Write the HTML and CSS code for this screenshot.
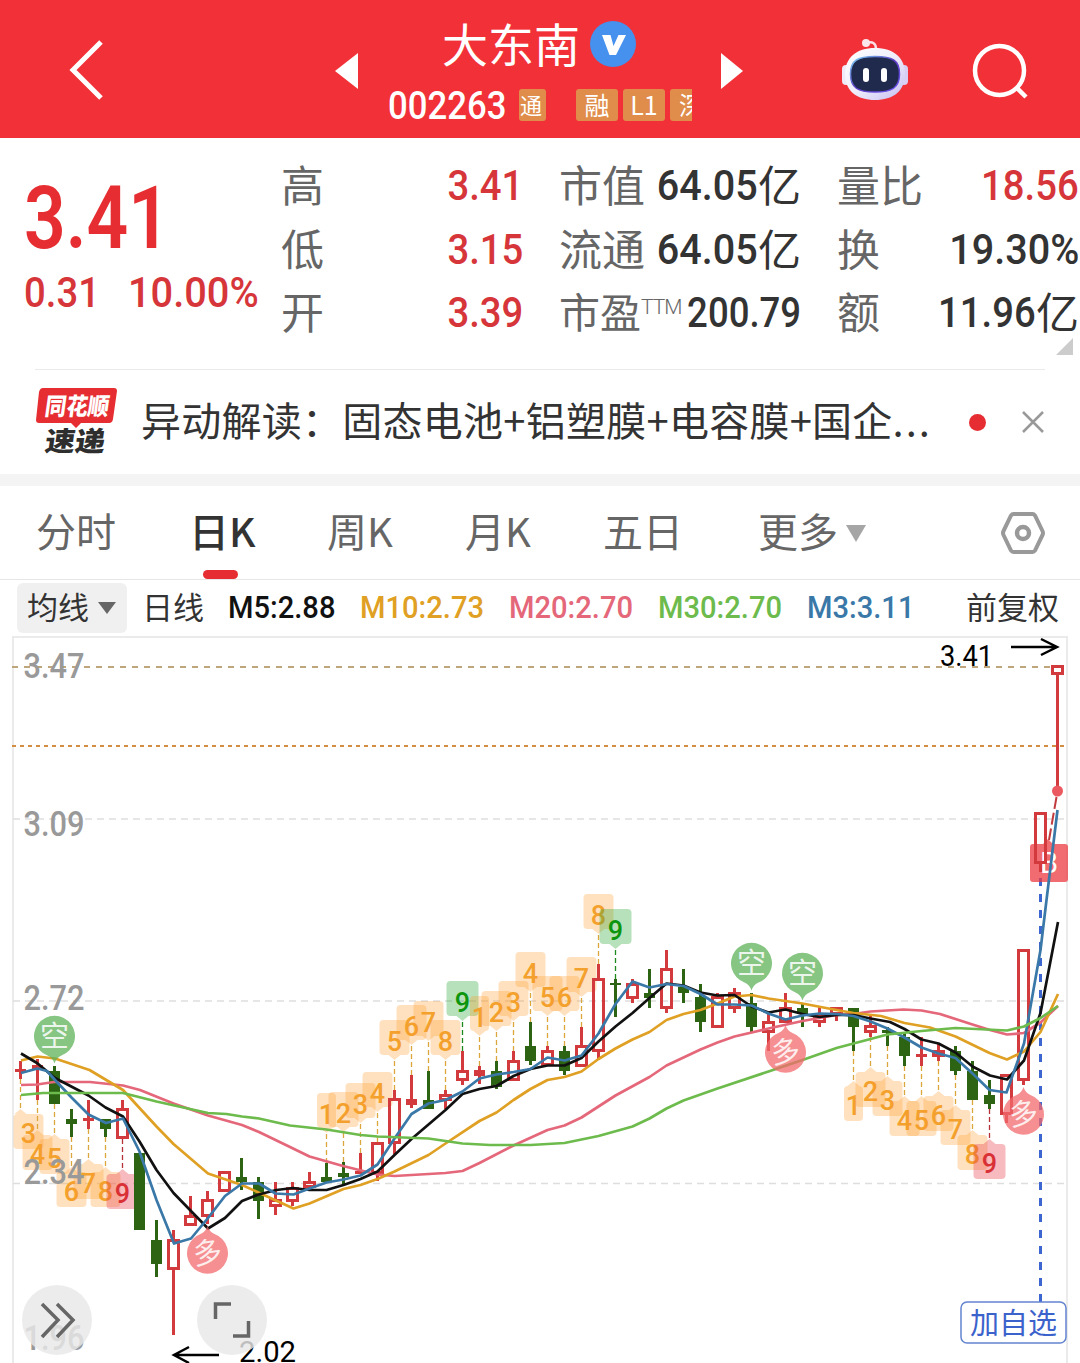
FILE: index.html
```
<!DOCTYPE html>
<html lang="zh-CN">

<head>
  <meta charset="utf-8">
  <title>大东南 002263</title>
  <link rel="stylesheet" href="styles.css">
</head>

<body>

  <header class="header">
    <svg class="back" width="40" height="64" viewBox="0 0 40 64">
      <path d="M34 4L6 32L34 60" fill="none" stroke="#fff" stroke-width="5" />
    </svg>
    <svg class="prev" width="23" height="36" viewBox="0 0 23 36">
      <path d="M23 0V36L0 18Z" fill="#fff" />
    </svg>
    <div class="stock">
      <div class="stock-name"><span>大东南</span>
        <svg width="46" height="46" viewBox="0 0 46 46">
          <circle cx="23" cy="23" r="23" fill="#4690ee" />
          <path d="M12 14H20.500L23.500 25L28.500 14H36L26 34H19.500Z" fill="#fff" />
        </svg>
      </div>
      <div class="stock-code">
        <span class="num code">002263</span>
        <span class="tag tag-first">通</span>
        <span class="tag">融</span>
        <span class="tag">L1</span>
        <span class="tag tag-last">深</span>
      </div>
    </div>
    <svg class="next" width="22" height="36" viewBox="0 0 22 36">
      <path d="M0 0V36L22 18Z" fill="#fff" />
    </svg>
    <svg class="robot" width="68" height="64" viewBox="0 0 68 64">
      <defs>
        <linearGradient id="head" x1="0" y1="0" x2="1" y2="1">
          <stop offset="0" stop-color="#fff" />
          <stop offset=".5" stop-color="#f0eefa" />
          <stop offset="1" stop-color="#c4bdf2" />
        </linearGradient>
        <linearGradient id="rim" x1="0" y1="0" x2="1" y2="1">
          <stop offset="0" stop-color="#7fd8f5" />
          <stop offset=".5" stop-color="#5c3cc4" />
          <stop offset="1" stop-color="#6a55ee" />
        </linearGradient>
      </defs>
      <path d="M26 6C31 4 35 6 35 12" fill="none" stroke="#fbdfe6" stroke-width="2.500" />
      <circle cx="25" cy="6" r="4" fill="#fbe6ec" />
      <rect x="1" y="28" width="8" height="20" rx="4" fill="#efeaf8" />
      <rect x="59" y="28" width="8" height="20" rx="4" fill="#d9cff5" />
      <path d="M34 11C53 11 64 21 64 37C64 54 52 63 34 63C16 63 4 54 4 37C4 21 15 11 34 11Z" fill="url(#head)" />
      <path d="M34 19.500C51 19.500 58.500 23 58.500 37C58.500 51 51 55 34 55C17 55 9.500 51 9.500 37C9.500 23 17 19.500 34 19.500Z" fill="#202a4c" stroke="url(#rim)" stroke-width="1.500" />
      <rect x="22" y="31" width="6" height="14" rx="3" fill="#fff" />
      <rect x="40" y="31" width="6" height="14" rx="3" fill="#fff" />
    </svg>
    <svg class="search" width="58" height="58" viewBox="0 0 58 58">
      <circle cx="27.500" cy="27.500" r="24.500" fill="none" stroke="#fff" stroke-width="4.500" />
      <path d="M44 44L54 54" stroke="#fff" stroke-width="4.500" />
    </svg>
  </header>

  <section class="quote">
    <div class="price">
      <div class="num last">3.41</div>
      <div class="change"><span class="num diff">0.31</span><span class="num percent">10.00%</span></div>
    </div>
    <div class="col">
      <p>高<span class="value up"><span class="num">3.41</span></span></p>
      <p>低<span class="value up"><span class="num">3.15</span></span></p>
      <p>开<span class="value up"><span class="num">3.39</span></span></p>
    </div>
    <div class="col">
      <p>市值<span class="value"><span class="num wide">64.05</span>亿</span></p>
      <p>流通<span class="value"><span class="num wide">64.05</span>亿</span></p>
      <p><span class="pe">市盈</span><sup>TTM</sup><span class="value"><span class="num pe-value">200.79</span></span></p>
    </div>
    <div class="col">
      <p>量比<span class="value up"><span class="num">18.56</span></span></p>
      <p>换<span class="value"><span class="num wide">19.30%</span></span></p>
      <p>额<span class="value"><span class="num">11.96</span>亿</span></p>
    </div>
    <i class="corner"></i>
  </section>

  <section class="news">
    <svg width="84" height="70" viewBox="0 0 84 70">
      <path d="M8 1H79Q82 1 82 4L78 32Q77.500 36 74 36H46L41 41L36 36H4Q1 36 1 33L4 5Q5 1 8 1Z" fill="#e62e32" />
      <text class="logo" x="10" y="28" textLength="64" lengthAdjust="spacingAndGlyphs" font-size="24" fill="#fff" transform="translate(3 0) skewX(-8)">同花顺</text>
      <text class="logo" x="10" y="64" textLength="60" lengthAdjust="spacingAndGlyphs" font-size="27" fill="#2e2e2e" transform="translate(8 0) skewX(-8)">速递</text>
    </svg>
    <span class="news-text">异动解读：固态电池+铝塑膜+电容膜+国企<span class="dots">...</span></span>
    <i class="dot"></i>
    <svg class="close" width="24" height="24" viewBox="0 0 24 24">
      <path d="M2 2L22 22M22 2L2 22" stroke="#999" stroke-width="2.500" />
    </svg>
  </section>

  <nav class="tabs">
    <a>分时</a>
    <a class="active">日K</a>
    <a>周K</a>
    <a>月K</a>
    <a>五日</a>
    <a>更多<i class="caret"></i></a>
    <svg class="settings" width="46" height="44" viewBox="0 0 46 44">
      <path d="M13.500 3H32.500Q34 3 35 4.500L42.500 20Q43.500 22 42.500 24L35 39.500Q34 41 32.500 41H13.500Q12 41 11 39.500L3.500 24Q2.500 22 3.500 20L11 4.500Q12 3 13.500 3Z" fill="none" stroke="#999" stroke-width="4" />
      <circle cx="23" cy="22" r="6" fill="none" stroke="#999" stroke-width="4.500" />
    </svg>
  </nav>

  <div class="averages">
    <span class="select">均线<i class="caret"></i></span>
    <span class="period">日线</span>
    <span class="ma ma-short m5"><span class="num">M5:2.88</span></span>
    <span class="ma m10"><span class="num">M10:2.73</span></span>
    <span class="ma m20"><span class="num">M20:2.70</span></span>
    <span class="ma m30"><span class="num">M30:2.70</span></span>
    <span class="ma ma-short m3"><span class="num">M3:3.11</span></span>
    <span class="adjust">前复权</span>
  </div>

  <svg class="chart" width="1080" height="727" viewBox="0 636 1080 727">
    <path class="frame" d="M13 1363V637H1067V1363" />
    <path class="grid" d="M13 819H1066M13 1001H1066M13 1183.500H1066" />
    <path class="grid-top" d="M12 667H1054" />
    <path class="grid-alert" d="M12 746H1064" />

    <g id="tags"></g>
    <path class="signal" d="M1040.500 878V1302" />
    <path d="M1030 847Q1030 844 1033 844H1043L1048 839L1053 844H1065Q1068 844 1068 847V879Q1068 882 1065 882H1033Q1030 882 1030 879Z" fill="#ec3b40" opacity=".75" />
    <text x="1049" y="873" font-size="29" text-anchor="middle" fill="#fff">B</text>
    <g id="candles"></g>
    <path d="M1056.500 797L1049 840" stroke="#c03a3e" stroke-width="2" stroke-dasharray="12 4" />
    <circle cx="1057.500" cy="791" r="5.500" fill="#ea5a60" />

    <g id="averages"></g>
    <g id="pins"></g>

    <g class="scale">
      <text x="23.500" y="678" textLength="61" lengthAdjust="spacingAndGlyphs">3.47</text>
      <text x="23.500" y="836" textLength="61" lengthAdjust="spacingAndGlyphs">3.09</text>
      <text x="23.500" y="1010" textLength="61" lengthAdjust="spacingAndGlyphs">2.72</text>
      <text x="23.500" y="1184" textLength="61" lengthAdjust="spacingAndGlyphs">2.34</text>
      <text x="23.500" y="1350" textLength="61" lengthAdjust="spacingAndGlyphs">1.96</text>
    </g>

    <g class="extremes">
      <text x="940" y="666" textLength="53" lengthAdjust="spacingAndGlyphs">3.41</text>
      <path d="M1011 647H1057M1041 639L1057 647L1041 655" />
      <text x="239" y="1362" textLength="57" lengthAdjust="spacingAndGlyphs">2.02</text>
      <path d="M219 1355H175M189 1347L174 1355L189 1363" />
    </g>

    <g class="round">
      <circle cx="57" cy="1320" r="35" />
      <path d="M42 1304L58 1320L42 1337M57 1304L73 1320L57 1337" />
      <circle cx="232" cy="1320" r="35" />
      <path d="M215.500 1319V1304H231M233 1336H248.500V1321" />
    </g>

    <rect x="961" y="1302" width="105" height="41" rx="6" fill="#fff" stroke="#6484d0" stroke-width="1.500" />
    <text x="970" y="1334" textLength="87" font-size="29" fill="#3c62cc">加自选</text>
  </svg>

  <script src="chart.js"></script>

</body>

</html>
```
FILE: styles.css
```
body {
  width: 1080px;
  margin: 0;
  background: #fff;
  color: #333;
  font-family: "Noto Sans CJK SC", sans-serif;
  overflow: hidden;
}

p {
  margin: 0;
}

svg {
  display: block;
  flex: none;
}

.num {
  display: inline-block;
  font-family: Roboto, sans-serif;
  font-weight: 500;
  transform: scaleX(.89);
  transform-origin: left;
}

.header {
  display: flex;
  height: 138px;
  background: #f23037;
  color: #fff;
}

.back {
  margin: 38px 0 0 67px;
}

.prev {
  margin: 53px 0 0 228px;
}

.stock {
  width: 302px;
  margin-left: 30px;
}

.stock-name {
  display: flex;
  gap: 10px;
  height: 50px;
  padding: 21px 0 0 54px;
  font-size: 46px;
  line-height: 43px;
  white-space: nowrap;
}

.stock-code {
  display: flex;
  gap: 5px;
  margin-top: 18px;
  line-height: 32px;
}

.code {
  width: 126px;
  font-size: 39px;
  line-height: 34px;
}

.tag {
  width: 42px;
  height: 32px;
  flex: none;
  border-radius: 3px;
  background: #e08d4b;
  font-size: 25px;
  line-height: 30px;
  text-align: center;
}

.tag-first {
  width: 27px;
  margin-right: 25px;
  font-size: 22px;
  text-indent: -3px;
  overflow: hidden;
}

.tag-last {
  width: 22px;
  border-radius: 3px 0 0 3px;
  text-align: left;
  text-indent: 9px;
  overflow: hidden;
}

.next {
  margin: 53px 0 0 31px;
}

.robot {
  margin: 37px 0 0 98px;
}

.search {
  margin: 43px 0 0 63px;
}

.quote {
  display: flex;
  gap: 36px;
  position: relative;
  height: 231px;
  font-size: 43px;
}

.price {
  width: 221px;
  padding-left: 24px;
  color: #e62e32;
}

.last {
  margin-top: 30px;
  font-size: 87px;
  font-weight: 600;
  line-height: 100px;
  transform: scaleX(.84);
}

.change {
  margin-top: -4px;
  line-height: 48px;
  color: #d6363a;
  white-space: nowrap;
}

.diff {
  width: 104px;
}

.percent {
  transform: scaleX(.925);
}

.col {
  width: 242px;
  padding-top: 16px;
}

.col p {
  display: flex;
  height: 63.5px;
  line-height: 59px;
  color: #666;
  white-space: nowrap;
}

.col .value {
  display: flex;
  flex: 1;
  justify-content: flex-end;
  margin-left: -30px;
  color: #333;
}

.col .up {
  color: #d6363a;
}

.col .num {
  line-height: 63px;
  transform-origin: right;
}

.col .wide {
  transform: scaleX(.92);
}

.col .pe-value {
  transform: scaleX(.85);
}

.pe {
  font-size: 41px;
}

.col sup {
  width: 41px;
  height: 40px;
  font-family: Roboto, sans-serif;
  font-size: 21px;
  font-weight: 300;
  line-height: 52px;
  letter-spacing: -1px;
  vertical-align: baseline;
}

.corner {
  position: absolute;
  right: 7px;
  bottom: 14px;
  border-left: 17px solid transparent;
  border-bottom: 17px solid #ccc;
}

.news {
  display: flex;
  align-items: center;
  height: 104px;
  margin: 0 35px;
  border-top: 1px solid #eaeaea;
}

.news-text {
  width: 812px;
  margin: -6px 0 0 22px;
  font-size: 40px;
  letter-spacing: .25px;
  white-space: nowrap;
}

.dots {
  letter-spacing: 2px;
}

.dot {
  width: 17px;
  height: 17px;
  margin-left: 18px;
  border-radius: 50%;
  background: #e62e32;
}

.close {
  margin-left: 35px;
}

.tabs {
  display: flex;
  box-sizing: border-box;
  height: 106px;
  border-top: 12px solid #f4f4f4;
  border-bottom: 1px solid #e6e6e6;
  padding-left: 36px;
  font-size: 40px;
  line-height: 88px;
  color: #666;
}

.tabs a {
  width: 138px;
  flex: none;
}

.tabs a:nth-child(1) {
  width: 153px;
}

.tabs a:nth-child(5) {
  width: 155px;
}

.tabs a:nth-child(6) {
  width: 242px;
}

.tabs .active {
  color: #333;
  font-weight: 500;
}

.active::after {
  content: "";
  display: block;
  width: 35px;
  height: 9px;
  margin: -4px 0 0 14px;
  border-radius: 5px;
  background: #e62e32;
}

.caret {
  display: inline-block;
  margin-left: 8px;
  border: 10px solid transparent;
  border-top: 17px solid #a6a6a6;
  border-bottom: 0;
  vertical-align: 5px;
}

.settings {
  margin-top: 25px;
}

.averages {
  display: flex;
  align-items: center;
  height: 56px;
  padding-left: 17px;
  font-size: 31px;
  line-height: 46px;
  white-space: nowrap;
}

.select {
  box-sizing: border-box;
  width: 110px;
  height: 50px;
  padding-left: 10px;
  border-radius: 6px;
  background: #f0f0f0;
  line-height: 45px;
}

.select .caret {
  margin-left: 9px;
  border-width: 12px 9px 0;
  border-top-color: #666;
}

.period {
  width: 86px;
  margin: -5px 0 0 15px;
}

.ma {
  width: 149px;
  margin-top: -6px;
  font-size: 32px;
}

.ma .num {
  transform: scaleX(.91);
}

.ma-short {
  width: 132px;
}

.adjust {
  margin: -5px 0 0 -1px;
}

.m5 { color: #111; }
.m10 { color: #dfa023; }
.m20 { color: #e4677a; }
.m30 { color: #6dbb4c; }
.m3 { width: 160px; color: #3a78a8; }

.chart text {
  font-family: Roboto, "Noto Sans CJK SC", sans-serif;
}

.logo {
  font-family: "Noto Sans CJK SC", sans-serif;
  font-weight: 900;
}

.frame {
  fill: none;
  stroke: #ebebeb;
  stroke-width: 2;
}

.grid {
  stroke: #dedede;
  stroke-width: 1.5;
  stroke-dasharray: 7 5;
}

.grid-top {
  stroke: #bfa57c;
  stroke-width: 2;
  stroke-dasharray: 6 6;
}

.grid-alert {
  stroke: #d08f45;
  stroke-width: 2;
  stroke-dasharray: 4 4;
}

.signal {
  stroke: #3c66d0;
  stroke-width: 3;
  stroke-dasharray: 8 8;
}

.line {
  fill: none;
  stroke-width: 2.7;
  stroke-linejoin: round;
}

.scale {
  fill: #999;
  font-size: 35px;
  font-weight: 500;
}

.extremes {
  fill: #000;
  font-size: 30px;
}

.extremes path {
  fill: none;
  stroke: #000;
  stroke-width: 2.5;
}

.round circle {
  fill: #e8e8e8;
  fill-opacity: .82;
}

.round path {
  fill: none;
  stroke: #666;
  stroke-width: 3.5;
}
```
FILE: chart.js
```
'use strict'

const NS = 'http://www.w3.org/2000/svg';
const RED = '#d23a3e';
const GREEN = '#2d6413';

// [direction, high, body top, body bottom, low]
const candles = [
  ['r', 1061, 1069, 1072, 1079], ['r', 1059, 1065, 1069, 1100], ['g', 1066, 1071, 1104, 1104],
  ['g', 1109, 1119, 1124, 1137], ['r', 1100, 1118, 1121, 1129], ['g', 1119, 1119, 1129, 1137],
  ['r', 1100, 1108, 1139, 1139], ['g', 1153, 1153, 1230, 1230], ['g', 1220, 1240, 1264, 1277],
  ['r', 1230, 1239, 1270, 1335], ['r', 1196, 1215, 1226, 1226], ['r', 1191, 1199, 1217, 1224],
  ['r', 1171, 1171, 1192, 1192], ['g', 1158, 1177, 1182, 1190], ['g', 1177, 1182, 1201, 1219],
  ['r', 1182, 1199, 1207, 1215], ['r', 1182, 1187, 1202, 1206], ['r', 1172, 1181, 1188, 1188],
  ['g', 1163, 1177, 1182, 1182], ['g', 1162, 1173, 1177, 1184], ['r', 1153, 1171, 1174, 1174],
  ['r', 1142, 1142, 1174, 1181], ['r', 1090, 1098, 1144, 1154], ['r', 1075, 1099, 1105, 1108],
  ['g', 1071, 1100, 1109, 1109], ['r', 1090, 1094, 1101, 1109], ['r', 1051, 1070, 1081, 1085],
  ['r', 1066, 1070, 1076, 1084], ['g', 1061, 1071, 1087, 1089], ['r', 1051, 1060, 1081, 1081],
  ['g', 1022, 1046, 1061, 1065], ['r', 1046, 1050, 1066, 1066], ['g', 1046, 1051, 1071, 1075],
  ['r', 1027, 1045, 1067, 1067], ['r', 964, 978, 1052, 1060], ['g', 979, 983, 985, 1017],
  ['r', 979, 983, 999, 1003], ['g', 969, 993, 998, 1008], ['r', 950, 968, 1009, 1013],
  ['g', 969, 987, 993, 1003], ['g', 984, 997, 1022, 1032], ['r', 993, 996, 1028, 1028],
  ['r', 988, 992, 1009, 1013], ['g', 993, 1003, 1027, 1032], ['r', 1013, 1021, 1033, 1051],
  ['r', 993, 1007, 1023, 1023], ['g', 1003, 1008, 1014, 1027], ['r', 1007, 1015, 1023, 1027],
  ['r', 1007, 1007, 1015, 1021], ['g', 1008, 1008, 1027, 1051], ['r', 1014, 1025, 1033, 1037],
  ['g', 1027, 1030, 1033, 1046], ['g', 1033, 1037, 1056, 1066], ['r', 1037, 1054, 1057, 1066],
  ['r', 1043, 1050, 1057, 1061], ['g', 1046, 1051, 1071, 1075], ['g', 1061, 1071, 1100, 1100],
  ['g', 1080, 1095, 1104, 1109], ['r', 1074, 1074, 1115, 1123], ['r', 949, 949, 1081, 1085],
  ['r', 812, 812, 864, 872], ['r', 665, 665, 675, 790]
];

// counts drawn above (1) or below (-1) the candles: [first candle, side, digits]
const counts = [
  [0, -1, '3456789'],
  [18, 1, '123456789'],
  [27, 1, '123456789'],
  [49, -1, '123456789']
];

const pins = [[2, '空'], [43, '空'], [46, '空'], [11, '多'], [45, '多'], [59, '多']];

const averages = {
  '#e4677a': '21,1085 37,1084.5 54,1082 90,1082 123,1085.5 140,1090 173.5,1103.5 208,1115.5 242,1125 259,1132 290,1147 309.5,1156.5 343,1166 377.5,1174.5 394.5,1176 445.5,1173 462.5,1171 479.5,1163 513.5,1145.5 547.5,1130 564.5,1125.5 581.5,1117.5 615.5,1095.5 649.5,1077 666.5,1065.5 700.5,1049.5 717.5,1042.5 734.5,1036.5 768.5,1028.5 802.5,1021 836.5,1015 853.5,1014 870.5,1011.5 903.5,1009.5 921.5,1010.5 940,1014 972.5,1024.5 990,1030 1007,1034.5 1024,1033 1040.5,1022.5 1058,1006',
  '#dfa023': '21,1060.5 37.5,1056.5 55,1058.5 89.5,1070 123,1090 156.5,1126.5 173.5,1144 208,1173.5 242,1185 293.5,1208.5 309.5,1203.5 343.5,1189 360.5,1185 377.5,1179 394.5,1171.5 428.5,1155 445.5,1143.5 479.5,1121 496.5,1112.5 513.5,1100 530.5,1089 547.5,1080 564.5,1077 581.5,1071.5 598.5,1059 615.5,1048.5 632.5,1039.5 649.5,1032 666.5,1020 683.5,1014 700.5,1010 717.5,1003.5 734.5,996.5 751.5,995 768.5,998.5 802.5,1003.5 836.5,1010 853.5,1013 881,1016 904.5,1023 930,1027.5 955.5,1036.5 989.5,1053 1007,1059.5 1024,1051.5 1040.5,1032 1058,994',
  '#111': '21,1053.5 37,1063 55,1078 88.5,1095.5 105.5,1107.5 123,1116.5 139.5,1141.5 156.5,1170 173.5,1193 190,1210 208,1228.5 225,1218 242,1201 258.5,1194.5 276.5,1190 293,1188 309.5,1190 326.5,1190 343.5,1185 360.5,1179 377.5,1171.5 394.5,1155 411.5,1139 445.5,1110 462.5,1094 479.5,1089 496.5,1086 513.5,1076 530.5,1069 547.5,1065.5 564.5,1065.5 581.5,1058 598.5,1041.5 615.5,1026.5 632.5,1013 649.5,998 666.5,983.5 683.5,985.5 700.5,992.5 717.5,995.5 734.5,995 751.5,1006.5 768.5,1012.5 785.5,1009.5 802.5,1014 819.5,1017 836.5,1015 853.5,1015 870.5,1018.5 890,1022 904.5,1029 921.5,1039.5 938.5,1043.5 955.5,1052.5 972.5,1066.5 990,1075.5 1007,1079.5 1024,1060.5 1040.5,1013 1058,922',
  '#3a78a8': '21,1073 37.5,1068.5 47,1071 55,1080 71.5,1097.5 88.5,1114.5 106,1123 123,1118.5 139.5,1151.5 156.5,1200 174,1243.5 191,1238.5 208,1218 225,1196 242,1183.5 259,1183.5 275.5,1193.5 293.5,1194.5 309.5,1188.5 326.5,1182.5 343.5,1179.5 360.5,1175.5 377.5,1164.5 394.5,1138.5 411.5,1114 428.5,1103.5 445.5,1100 462.5,1091.5 479.5,1078.5 496.5,1074.5 513.5,1072 530.5,1069 547.5,1057.5 564.5,1060.5 581.5,1055.5 598.5,1033.5 615.5,1004 632.5,981.5 649.5,987.5 666.5,984 683.5,986 700.5,994 717.5,1004.5 734.5,1004.5 751.5,1005.5 768.5,1013.5 785.5,1019.5 802.5,1015.5 819.5,1013.5 836.5,1014 853.5,1016 870.5,1021.5 887.5,1028.5 904.5,1037.5 921.5,1047.5 938.5,1053.5 955.5,1058 972.5,1073.5 989.5,1090 1006.5,1092.5 1024,1043.5 1040.5,950 1046.5,900 1057.5,810',
  '#6dbb4c': '21,1095 43,1093 123,1093 156.5,1101.5 208,1113 226.5,1114 242,1116.5 259,1118.5 290,1125.5 326.5,1129.5 360.5,1135 377.5,1136.5 428.5,1138.5 462.5,1143.5 490,1145 530.5,1145 564.5,1143 581.5,1139.5 598.5,1136 632.5,1126.5 649.5,1118.5 666.5,1108.5 683.5,1100.5 717.5,1088.5 768.5,1071.5 802.5,1060 836.5,1048 853.5,1043.5 887.5,1034.5 921.5,1031 955.5,1028 1007,1030.5 1024,1026.5 1040.5,1018 1058,1006'
};

function draw(parent, name, attrs, text) {
  let el = document.createElementNS(NS, name);
  for (let key in attrs) el.setAttribute(key, attrs[key]);
  if (text) el.textContent = text;
  document.getElementById(parent).appendChild(el);
}

function candleX(i) {
  return 20.5 + 17 * i;
}

candles.forEach(([type, high, top, bottom, low], i) => {
  let x = candleX(i);
  let color = type == 'r' ? RED : GREEN;
  draw('candles', 'path', { d: `M${x} ${high}V${top}M${x} ${bottom}V${low}`, stroke: color, 'stroke-width': 3 });
  if (type == 'r' && bottom - top > 6) {
    draw('candles', 'rect', { x: x - 5, y: top + 1.5, width: 10, height: bottom - top - 3, fill: 'none', stroke: color, 'stroke-width': 3 });
  } else {
    draw('candles', 'rect', { x: x - 5.5, y: top, width: 11, height: bottom - top, fill: color });
  }
});

counts.forEach(([first, side, digits]) => {
  [...digits].forEach((digit, n) => {
    let x = candleX(first + n);
    let [, high, , , low] = candles[first + n];
    let start = side > 0 ? high : low;
    let tip = start - 30 * side;
    let half = digit == '1' ? 9.5 : digit == '9' ? 16 : 15;
    let center = Math.max(x, 28.5);
    let fill = '#ff9c2a', color = '#f3a02c', dash = '#dba63c';
    if (digit == '9') {
      fill = side > 0 ? '#2ca836' : '#e83844';
      color = side > 0 ? '#0d960d' : '#d93036';
      dash = side > 0 ? '#1c8a1c' : '#b5323a';
    }
    draw('tags', 'path', { d: `M${x} ${start}V${tip}`, stroke: dash, 'stroke-width': 1.3, 'stroke-dasharray': '5 3' });
    let top = side > 0 ? tip - 40 : tip + 5;
    let base = tip - 5 * side;
    draw('tags', 'path', {
      d: `M${center - half + 4} ${top}h${half * 2 - 8}q4 0 4 4v27q0 4 -4 4h${8 - half * 2}q-4 0 -4 -4v-27q0 -4 4 -4z`,
      fill: fill, 'fill-opacity': digit == '9' ? .34 : .3
    });
    draw('tags', 'path', {
      d: `M${x - 6} ${base}h12L${x} ${tip}z`,
      fill: fill, 'fill-opacity': digit == '9' ? .34 : .3
    });
    draw('tags', 'text', {
      x: center, y: side > 0 ? tip - 9 : tip + 34, fill: color,
      'font-size': 27, 'font-weight': 500, 'text-anchor': 'middle'
    }, digit);
  });
});

for (let color in averages) {
  draw('averages', 'polyline', { points: averages[color], class: 'line', stroke: color });
}

pins.forEach(([i, label]) => {
  let x = candleX(i);
  let above = label == '空';
  let y = above ? candles[i][1] - 29.5 : candles[i][4] + 29;
  let s = above ? 1 : -1;
  let color = above ? '#5db158' : '#f26a6c';
  draw('pins', 'path', {
    d: `M${x - 7} ${y + 19 * s}A20.5 20.5 0 1 ${above ? 1 : 0} ${x + 7} ${y + 19 * s}Q${x + 2} ${y + 21 * s} ${x} ${y + 27 * s}Q${x - 2} ${y + 21 * s} ${x - 7} ${y + 19 * s}Z`,
    fill: color, 'fill-opacity': .75
  });
  draw('pins', 'text', {
    x: x, y: y + 10, fill: '#fff', 'fill-opacity': .85, 'font-size': 29, 'text-anchor': 'middle',
    transform: above ? '' : `rotate(-8 ${x} ${y})`
  }, label);
});
```
